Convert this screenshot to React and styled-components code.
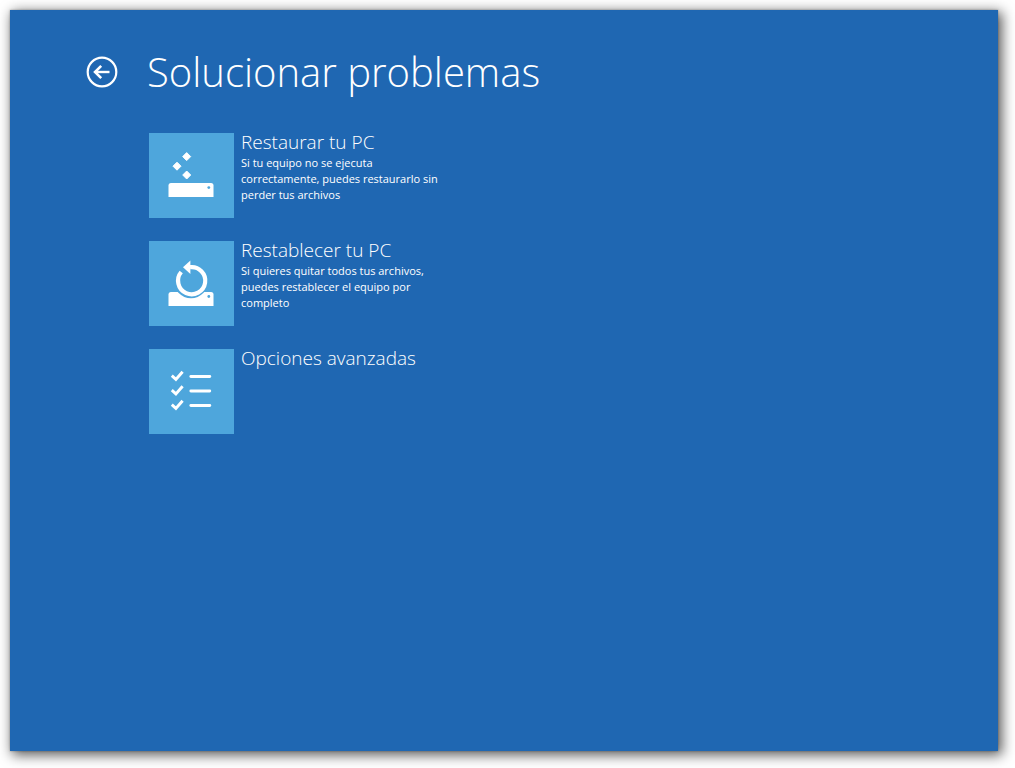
import React from "react";
import styled, { createGlobalStyle } from "styled-components";

const GlobalStyle = createGlobalStyle`
  *, *::before, *::after { box-sizing: border-box; }
  body {
    margin: 0;
    background: #ffffff;
    font-family: "Open Sans", "Noto Sans", sans-serif;
  }
`;

const Page = styled.div`
  display: flex;
  min-height: 100vh;
  padding: 10px 17px 17px 10px;
`;

const Screen = styled.main`
  flex: 1;
  padding: 32px 76px;
  color: #ffffff;
  background: #1f67b2;
  box-shadow: 0 0 2px rgba(0, 0, 0, 0.3), 3px 3px 12px 1px rgba(0, 0, 0, 0.65);
`;

const Header = styled.header`
  display: flex;
  align-items: center;
  gap: 29px;
`;

const BackButton = styled.button`
  display: flex;
  flex: none;
  padding: 0;
  border: 0;
  color: inherit;
  background: none;
  cursor: pointer;
`;

const Title = styled.h1`
  margin: 0;
  font-size: 40px;
  font-weight: 300;
  line-height: 60px;
`;

const OptionList = styled.ul`
  display: flex;
  flex-direction: column;
  gap: 23px;
  margin: 31px 0 0;
  padding: 0 0 0 63px;
  list-style: none;
`;

const OptionButton = styled.button`
  display: flex;
  align-items: flex-start;
  gap: 7px;
  padding: 0;
  border: 0;
  color: inherit;
  background: none;
  font: inherit;
  text-align: left;
  cursor: pointer;
`;

const Tile = styled.span`
  display: flex;
  flex: none;
  width: 85px;
  height: 85px;
  background: #4ea6dc;
`;

const OptionText = styled.span`
  display: flex;
  flex-direction: column;
`;

const OptionName = styled.span`
  font-size: 19px;
  font-weight: 300;
  line-height: 22px;
  margin-top: -2px;
`;

const OptionDetail = styled.span`
  max-width: 204px;
  margin-top: 2px;
  font-size: 11px;
  line-height: 16px;
`;

const BackIcon = () => (
  <svg width="32" height="32" viewBox="0 0 32 32" fill="none" stroke="currentColor" aria-hidden="true">
    <circle cx="16" cy="16" r="14.3" strokeWidth="2.2" />
    <path d="M23.5 16H9" strokeWidth="2.4" />
    <path d="M15.2 9.800L9 16l6.200 6.200" strokeWidth="2.600" />
  </svg>
);

const RefreshIcon = () => (
  <svg width="85" height="85" viewBox="1 0 85 85" fill="#fff" aria-hidden="true">
    <path
      d="M38.700 19.600l4 4-4 4-4-4zM29 29.200l4 4-4 4-4-4zM38.700 38l4 4-4 4-4-4z"
      stroke="#fff"
      strokeWidth="1"
      strokeLinejoin="round"
    />
    <path d="M20.500 64V52.500a2.500 2.500 0 0 1 2.500-2.500H63a2.500 2.500 0 0 1 2.500 2.500V64z" />
    <circle cx="60.800" cy="54.600" r="1.400" fill="#4ea6dc" />
  </svg>
);

const ResetIcon = () => (
  <svg width="85" height="85" viewBox="1 0 85 85" fill="#fff" aria-hidden="true">
    <path d="M20.500 65V53.500a2.500 2.500 0 0 1 2.500-2.500H63a2.500 2.500 0 0 1 2.500 2.500V65z" />
    <circle cx="43" cy="39.800" r="17.400" fill="#4ea6dc" />
    <path d="M33.200 31A13.600 13.600 0 1 0 42 26.200" fill="none" stroke="#fff" strokeWidth="4.200" />
    <path d="M42.400 19.500V33L35 26.200z" />
    <circle cx="60.800" cy="55.500" r="1.400" fill="#4ea6dc" />
  </svg>
);

const ChecklistIcon = () => (
  <svg width="85" height="85" viewBox="1 0 85 85" fill="none" stroke="#fff" aria-hidden="true">
    {[27.500, 42, 56.500].map((y) => (
      <g key={y} transform={`translate(0 ${y})`}>
        <path d="M23.800 -0.800L27.900 2.900L34.600 -4.800" strokeWidth="2.900" />
        <path d="M42.800 0H61.800" strokeWidth="2.800" strokeLinecap="round" />
      </g>
    ))}
  </svg>
);

const options = [
  {
    name: "Restaurar tu PC",
    detail: "Si tu equipo no se ejecuta correctamente, puedes restaurarlo sin perder tus archivos",
    Icon: RefreshIcon,
  },
  {
    name: "Restablecer tu PC",
    detail: "Si quieres quitar todos tus archivos, puedes restablecer el equipo por completo",
    Icon: ResetIcon,
  },
  { name: "Opciones avanzadas", Icon: ChecklistIcon },
];

export default function App() {
  return (
    <>
      <GlobalStyle />
      <Page>
        <Screen>
          <Header>
            <BackButton type="button" aria-label="Atrás">
              <BackIcon />
            </BackButton>
            <Title>Solucionar problemas</Title>
          </Header>
          <OptionList>
            {options.map(({ name, detail, Icon }) => (
              <li key={name}>
                <OptionButton type="button">
                  <Tile>
                    <Icon />
                  </Tile>
                  <OptionText>
                    <OptionName>{name}</OptionName>
                    {detail && <OptionDetail>{detail}</OptionDetail>}
                  </OptionText>
                </OptionButton>
              </li>
            ))}
          </OptionList>
        </Screen>
      </Page>
    </>
  );
}
